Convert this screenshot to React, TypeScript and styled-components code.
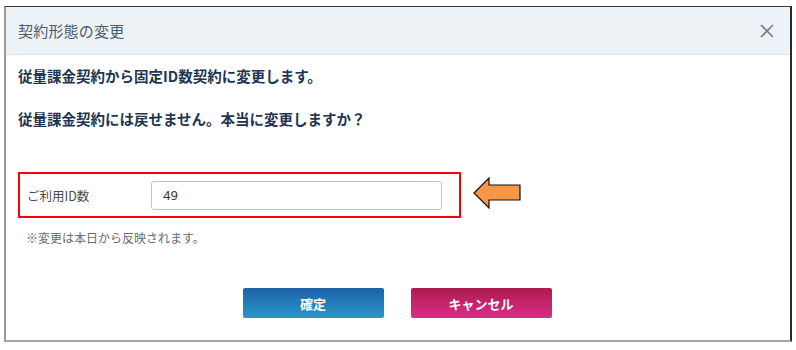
import React from "react";
import styled, { createGlobalStyle } from "styled-components";

const Global = createGlobalStyle`
  html, body { margin: 0; padding: 0; background: #ffffff; }
  body { font-family: "Noto Sans CJK JP", "Noto Sans", sans-serif; }
`;

const Frame = styled.div`
  margin: 6px 0 0 4px;
  width: 784px;
  height: 333px;
  border-top: 1px solid #3a3a3a;
  border-left: 2px solid #9a9a9a;
  border-right: 2px solid #2a2a2a;
  border-bottom: 2px solid #a5a5a5;
  display: flex;
  flex-direction: column;
  background: #fff;
`;

const Header = styled.div`
  height: 47px;
  background: #edf2f7;
  border-bottom: 1px solid #dfe5ec;
  display: flex;
  align-items: center;
  justify-content: space-between;
  padding: 0 16px 0 12px;
`;

const Title = styled.div`
  font-size: 15px;
  color: #4d5a67;
  letter-spacing: 0.2px;
`;

const Close = styled.button`
  border: none;
  background: none;
  padding: 0;
  width: 14px;
  height: 14px;
  display: flex;
  cursor: pointer;
`;

const Body = styled.div`
  padding: 10px 0 0 12px;
  display: flex;
  flex-direction: column;
`;

const Message = styled.p`
  margin: 0;
  font-size: 14.5px;
  font-weight: bold;
  color: #1f3552;
  line-height: 22px;
  & + & { margin-top: 21px; }
`;

const FieldRow = styled.div`
  display: flex;
  align-items: center;
  margin-top: 42px;
`;

const Highlight = styled.div`
  box-sizing: border-box;
  width: 443px;
  height: 46px;
  border: 2px solid #ff0000;
  display: flex;
  align-items: center;
  padding-left: 7px;
`;

const Label = styled.label`
  width: 124px;
  font-size: 12.5px;
  color: #4a4a4a;
`;

const Input = styled.input`
  width: 291px;
  height: 29px;
  box-sizing: border-box;
  border: 1px solid #b9c7d6;
  border-radius: 3px;
  padding: 0 11px;
  font-family: "Noto Sans", sans-serif;
  font-size: 13px;
  color: #333;
  outline: none;
`;

const Arrow = styled.svg`
  margin-left: 12px;
  margin-top: -4px;
`;

const Note = styled.div`
  margin: 11px 0 0 8px;
  font-size: 12px;
  color: #6a6a6a;
`;

const Buttons = styled.div`
  display: flex;
  justify-content: center;
  gap: 27px;
  margin-top: 42px;
  padding-right: 14px;
`;

const Button = styled.button<{ $variant: "primary" | "cancel" }>`
  width: 141px;
  height: 30px;
  border: none;
  border-radius: 2px;
  color: #fff;
  font-family: "Noto Sans CJK JP", sans-serif;
  font-weight: bold;
  font-size: 13px;
  background: ${(p) =>
    p.$variant === "primary"
      ? "linear-gradient(#1c61a7, #2997c9)"
      : "linear-gradient(#ad1a4e, #da2e88)"};
`;

export default function App() {
  return (
    <>
      <Global />
      <Frame>
        <Header>
          <Title>契約形態の変更</Title>
          <Close aria-label="close">
            <svg width="14" height="14" viewBox="0 0 14 14">
              <path d="M1 1 L13 13 M13 1 L1 13" stroke="#6d7f92" strokeWidth="1.6" fill="none" />
            </svg>
          </Close>
        </Header>
        <Body>
          <Message>従量課金契約から固定ID数契約に変更します。</Message>
          <Message>従量課金契約には戻せません。本当に変更しますか？</Message>
          <FieldRow>
            <Highlight>
              <Label>ご利用ID数</Label>
              <Input defaultValue="49" />
            </Highlight>
            <Arrow width="50" height="32" viewBox="0 0 50 32">
              <path
                d="M1 16 L16 1 L16 8 L47 8 L47 23 L16 23 L16 31 Z"
                fill="#f79646"
                stroke="#111"
                strokeWidth="1.2"
                strokeLinejoin="miter"
              />
            </Arrow>
          </FieldRow>
          <Note>※変更は本日から反映されます。</Note>
          <Buttons>
            <Button $variant="primary">確定</Button>
            <Button $variant="cancel">キャンセル</Button>
          </Buttons>
        </Body>
      </Frame>
    </>
  );
}
